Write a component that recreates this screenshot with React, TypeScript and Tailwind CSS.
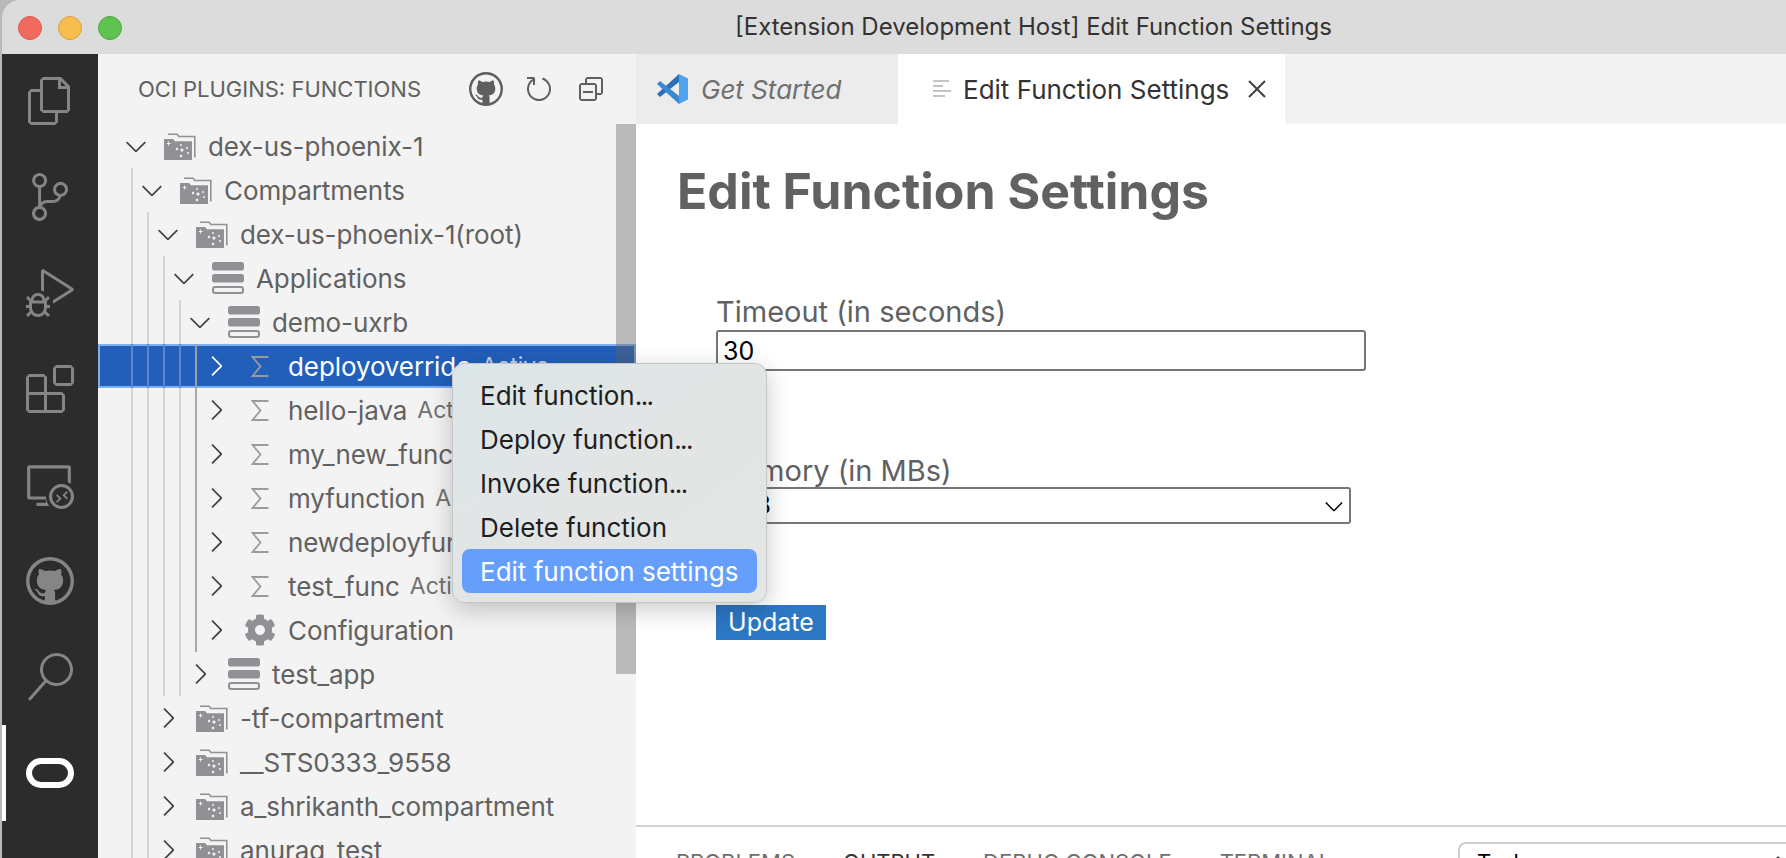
import { FaCog } from "react-icons/fa";
import {
  VscChevronDown,
  VscChevronRight,
  VscClose,
  VscCollapseAll,
  VscDebugAlt,
  VscExtensions,
  VscFiles,
  VscGithub,
  VscRefresh,
  VscRemoteExplorer,
  VscSearch,
  VscSourceControl,
} from "react-icons/vsc";

type Kind = "folder" | "stack" | "sigma" | "gear";

type Row = {
  label: string;
  depth: number;
  kind: Kind;
  open?: boolean;
  desc?: string;
  selected?: boolean;
  activeGuide?: boolean;
};

const ROWS: Row[] = [
  { label: "dex-us-phoenix-1", depth: 0, kind: "folder", open: true },
  { label: "Compartments", depth: 1, kind: "folder", open: true },
  { label: "dex-us-phoenix-1(root)", depth: 2, kind: "folder", open: true },
  { label: "Applications", depth: 3, kind: "stack", open: true },
  { label: "demo-uxrb", depth: 4, kind: "stack", open: true },
  { label: "deployoverride", depth: 5, kind: "sigma", desc: "Active", selected: true, activeGuide: true },
  { label: "hello-java", depth: 5, kind: "sigma", desc: "Active", activeGuide: true },
  { label: "my_new_function", depth: 5, kind: "sigma", desc: "Active", activeGuide: true },
  { label: "myfunction", depth: 5, kind: "sigma", desc: "Active", activeGuide: true },
  { label: "newdeployfunction", depth: 5, kind: "sigma", desc: "Active", activeGuide: true },
  { label: "test_func", depth: 5, kind: "sigma", desc: "Active", activeGuide: true },
  { label: "Configuration", depth: 5, kind: "gear", activeGuide: true },
  { label: "test_app", depth: 4, kind: "stack" },
  { label: "-tf-compartment", depth: 2, kind: "folder" },
  { label: "__STS0333_9558", depth: 2, kind: "folder" },
  { label: "a_shrikanth_compartment", depth: 2, kind: "folder" },
  { label: "anurag_test", depth: 2, kind: "folder" },
];

const MENU = ["Edit function", "Deploy function", "Invoke function"];

function FolderIcon() {
  return (
    <svg width="32" height="27" viewBox="0 0 32 27" fill="none">
      <path d="M4 1.2h9l2 2.3h15.8v21" stroke="#8f9194" strokeWidth="1.6" />
      <path d="M0 6h9l2 2.2h17V27H0z" fill="#8f9194" />
      <g fill="#f3f3f3">
        <path d="M3 10h1v-1.500h1V10h1.500v1H5v1.500H4V11H3z" />
        <circle cx="17" cy="12" r="1" />
        <circle cx="13" cy="16" r="1.200" />
        <circle cx="18" cy="17" r="1.600" />
        <circle cx="23" cy="15" r="1" />
        <circle cx="24" cy="20" r="1" />
        <circle cx="17" cy="23" r="1.300" />
      </g>
    </svg>
  );
}

function StackIcon() {
  return (
    <svg width="32" height="32" viewBox="0 0 32 32">
      <rect x="0" y="0" width="32" height="8.500" rx="2.500" fill="#8f9194" />
      <rect x="0" y="12" width="32" height="8.500" rx="2.500" fill="#8f9194" />
      <rect x="1" y="25" width="30" height="6" rx="2" fill="none" stroke="#8f9194" strokeWidth="2" />
    </svg>
  );
}

function SigmaIcon() {
  return (
    <svg width="18" height="21" viewBox="0 0 18 21" fill="none">
      <path d="M17.500 1H1.500l8 9.500-8 9.500h16" stroke="#9b9b9b" strokeWidth="1.800" />
    </svg>
  );
}

function TreeIcon({ kind }: { kind: Kind }) {
  return (
    <span className="flex h-8 w-8 shrink-0 items-center justify-center">
      {kind === "folder" && <FolderIcon />}
      {kind === "stack" && <StackIcon />}
      {kind === "sigma" && <SigmaIcon />}
      {kind === "gear" && <FaCog size={32} color="#8f9194" />}
    </span>
  );
}

function TreeRow({ row }: { row: Row }) {
  const guides = Array.from({ length: row.depth }, (_, i) => i);
  return (
    <div
      className={
        row.selected
          ? "flex h-11 items-center border-2 border-[#7fb0ee] bg-[#225fbb] pl-[31px] text-white"
          : "flex h-11 items-center pl-[33px] text-[#616161]"
      }
    >
      {guides.map((i) => {
        const last = row.activeGuide && i === row.depth - 1;
        let color = "border-[#d6d6d6]";
        if (last) color = "border-[#a9a9a9]";
        if (row.selected) color = last ? "border-[#9a9ea6]" : "border-[#5c86c8]";
        return (
          <span
            key={i}
            className={`-my-[2px] h-[44px] w-4 shrink-0 border-l-2 ${color}`}
          />
        );
      })}
      <span className={`-ml-[6px] mr-[17px] flex w-[22px] shrink-0 justify-center ${row.selected ? "text-white" : "text-[#424242]"}`}>
        {row.open ? <VscChevronDown size={32} className="shrink-0" /> : <VscChevronRight size={32} className="shrink-0" />}
      </span>
      <TreeIcon kind={row.kind} />
      <span className="ml-3 whitespace-nowrap text-[26px] tracking-[-0.1px]">{row.label}</span>
      {row.desc && (
        <span className={`ml-[10px] whitespace-nowrap text-[23px] ${row.selected ? "text-[#c3d4ee]" : "text-[#717171]"}`}>
          {row.desc}
        </span>
      )}
    </div>
  );
}

function ActivityBar() {
  return (
    <aside className="relative flex w-[96px] shrink-0 flex-col items-center overflow-hidden bg-[#2c2c2c] text-[#858585]">
      <div className="-mt-px flex h-24 shrink-0 items-center justify-center"><VscFiles size={48} /></div>
      <div className="flex h-24 shrink-0 items-center justify-center"><VscSourceControl size={48} /></div>
      <div className="flex h-24 shrink-0 items-center justify-center"><VscDebugAlt size={48} /></div>
      <div className="flex h-24 shrink-0 items-center justify-center"><VscExtensions size={48} /></div>
      <div className="flex h-24 shrink-0 items-center justify-center"><VscRemoteExplorer size={48} /></div>
      <div className="flex h-24 shrink-0 items-center justify-center"><VscGithub size={48} /></div>
      <div className="flex h-24 shrink-0 items-center justify-center"><VscSearch size={48} /></div>
      <div className="flex h-24 w-full shrink-0 items-center justify-center border-l-4 border-white pr-1">
        <svg width="48" height="30" viewBox="0 0 48 30" fill="none">
          <rect x="3" y="3" width="42" height="24" rx="12" stroke="#ffffff" strokeWidth="6" />
        </svg>
      </div>
    </aside>
  );
}

function Sidebar() {
  return (
    <aside className="relative flex w-[538px] shrink-0 flex-col overflow-hidden bg-[#f3f3f3]">
      <div className="flex h-[70px] shrink-0 items-center pl-[40px] text-[#616161]">
        <span className="whitespace-nowrap text-[22px]">OCI PLUGINS: FUNCTIONS</span>
        <span className="ml-[48px] flex items-center gap-[20px] text-[#5f5f5f]">
          <VscGithub size={34} />
          <VscRefresh size={32} />
          <VscCollapseAll size={32} />
        </span>
      </div>
      <div className="flex flex-col">
        {ROWS.map((row) => (
          <TreeRow key={row.label} row={row} />
        ))}
      </div>
      {/* overlay scrollbar */}
      <div className="absolute right-0 top-[70px] h-[550px] w-5 bg-[rgba(100,100,100,0.4)]" />
    </aside>
  );
}

function VsCodeLogo() {
  return (
    <svg width="32" height="32" viewBox="0 0 32 32">
      <path d="M23 1 1 21l3 3 19-15z" fill="#2d6fb5" />
      <path d="M4 8 1 11l22 20v-8z" fill="#3c86d4" />
      <path d="M23 1l9 4.500v21L23 31z" fill="#4ea2ee" />
    </svg>
  );
}

function Tabs() {
  return (
    <div className="flex h-[70px] shrink-0 bg-[#f3f3f3]">
      <div className="flex w-[262px] items-center bg-[#ececec] pl-5">
        <VsCodeLogo />
        <span className="ml-[13px] whitespace-nowrap text-[26px] italic text-[#6f6f6f]">Get Started</span>
      </div>
      <div className="flex w-[387px] items-center bg-white pl-[35px]">
        <svg width="18" height="20" viewBox="0 0 18 20" fill="#c4c4c4">
          <rect x="0" y="1" width="16" height="2" />
          <rect x="0" y="6" width="10" height="2" />
          <rect x="0" y="11" width="18" height="2" />
          <rect x="0" y="16" width="12" height="2" />
        </svg>
        <span className="ml-[12px] whitespace-nowrap text-[26px] text-[#333333]">Edit Function Settings</span>
        <VscClose size={32} className="ml-[12px] shrink-0 text-[#424242]" />
      </div>
    </div>
  );
}

function EditorForm() {
  return (
    <div className="flex-1 overflow-hidden bg-white pl-[41px] text-[#616161]">
      <h1 className="mt-[38px] whitespace-nowrap text-[50px] font-bold leading-[58px]">Edit Function Settings</h1>
      <div className="ml-[39px] mt-[75px] flex flex-col">
        <label className="text-[29px] leading-[34px]">Timeout (in seconds)</label>
        <input
          defaultValue="30"
          className="mt-[1px] h-[41px] w-[650px] rounded-[3px] border-2 border-[#767676] bg-white px-[5px] text-[25px] text-black"
        />
        <label className="mt-[83px] text-[29px] leading-[34px]">Memory (in MBs)</label>
        <div className="mt-[-1px] flex h-[37px] w-[635px] items-center justify-between rounded-[3px] border-2 border-[#767676] bg-white pl-[12px] pr-[1px] text-[25px] text-black">
          <span>128</span>
          <VscChevronDown size={28} />
        </div>
        <button className="mt-[81px] flex h-[35px] w-[110px] items-center justify-center bg-[#2c77c4] text-[25px] text-white">
          Update
        </button>
      </div>
    </div>
  );
}

function Panel() {
  return (
    <div className="relative flex h-[33px] shrink-0 items-start overflow-hidden border-t-2 border-[#d2d2d2] bg-white pl-[40px] pt-[22px] text-[22px] leading-[26px] text-[#6f6f6f]">
      <span>PROBLEMS</span>
      <span className="ml-[48px] text-[#333333]">OUTPUT</span>
      <span className="ml-[48px]">DEBUG CONSOLE</span>
      <span className="ml-[48px]">TERMINAL</span>
      <div className="absolute left-[822px] top-[15px] flex h-[40px] w-[340px] justify-between rounded-[8px] border-2 border-[#cecece] pl-[17px] pr-[6px] pt-[5px] text-[22px] text-black">
        <span>Tasks</span>
        <VscChevronDown size={24} className="rotate-180 text-[#333333]" />
      </div>
    </div>
  );
}

function ContextMenu() {
  return (
    <div className="absolute left-[452px] top-[363px] z-10 w-[315px] rounded-[12px] border border-[#c4c6c6] bg-gradient-to-br from-[#dce6e8] via-[#e3e5e5] to-[#e4e5e5] px-[9px] pb-[9px] pt-[9px] shadow-[0_6px_24px_rgba(0,0,0,0.22)]">
      {MENU.map((item) => (
        <div key={item} className="flex h-11 items-center whitespace-pre pl-[18px] text-[26px] text-[#1e1e1e]">
          {item}
          <span className="tracking-[-1.5px]">...</span>
        </div>
      ))}
      <div className="flex h-11 items-center pl-[18px] text-[26px] text-[#1e1e1e]">Delete function</div>
      <div className="flex h-11 items-center rounded-[8px] bg-[#669efb] pl-[18px] text-[26px] text-white">
        Edit function settings
      </div>
    </div>
  );
}

export default function App() {
  return (
    <div className="relative flex h-[858px] w-[1786px] flex-col overflow-hidden bg-[#b9b9b9] pl-[2px] font-['Inter',sans-serif]">
      <header className="flex h-[54px] shrink-0 items-center rounded-tl-[18px] bg-[#dcdcdc] pl-[16px]">
        <span className="mt-[2px] h-6 w-6 rounded-full border border-[#dd5a50] bg-[#f2695f]" />
        <span className="ml-4 mt-[2px] h-6 w-6 rounded-full border border-[#dca03a] bg-[#f7bd4e]" />
        <span className="ml-4 mt-[2px] h-6 w-6 rounded-full border border-[#49a93f] bg-[#5dc54f]" />
        <span className="ml-[613px] whitespace-nowrap text-[24px] text-[#333333]">
          [Extension Development Host] Edit Function Settings
        </span>
      </header>
      <div className="flex min-h-0 flex-1">
        <ActivityBar />
        <Sidebar />
        <main className="flex min-w-0 flex-1 flex-col">
          <Tabs />
          <EditorForm />
          <Panel />
        </main>
      </div>
      <ContextMenu />
    </div>
  );
}
